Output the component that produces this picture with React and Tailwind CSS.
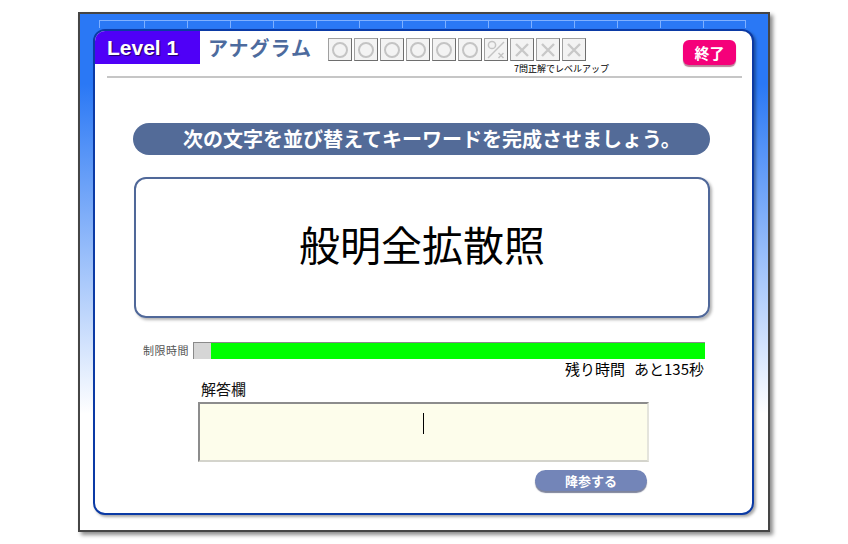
import React from 'react'

const jp = "font-['Noto_Sans_CJK_JP','Noto_Sans',sans-serif]"

const Circle = () => (
  <svg width="18" height="18" viewBox="0 0 18 18">
    <circle cx="9" cy="9" r="7" fill="none" stroke="#c4c4c4" strokeWidth="2" />
  </svg>
)

const Cross = () => (
  <svg width="18" height="18" viewBox="0 0 18 18">
    <path d="M3 3 L15 15 M15 3 L3 15" stroke="#c8c8c8" strokeWidth="2.4" />
  </svg>
)

const Half = () => (
  <svg width="20" height="20" viewBox="0 0 20 20">
    <circle cx="6" cy="5" r="3.6" fill="none" stroke="#c4c4c4" strokeWidth="1.5" />
    <path d="M2 18 L18 2" stroke="#c4c4c4" strokeWidth="1.5" />
    <path d="M12.5 13 L17.5 18 M17.5 13 L12.5 18" stroke="#c4c4c4" strokeWidth="1.5" />
  </svg>
)

const marks = ['o', 'o', 'o', 'o', 'o', 'o', 'h', 'x', 'x', 'x']

const Mark = ({ kind }) => (
  <div className="w-[24px] h-[23px] flex items-center justify-center bg-[#f3f3f3] border border-[#a0a0a0] border-r-[#6e6e6e] border-b-[#6e6e6e]">
    {kind === 'o' ? <Circle /> : kind === 'x' ? <Cross /> : <Half />}
  </div>
)

const Header = () => (
  <header className="flex items-start h-[45px]">
    <div className="w-[105px] h-[33px] bg-[#4f00f7] flex items-center pl-[12px]">
      <span className="font-['Liberation_Sans',sans-serif] font-bold text-[21px] text-white [text-shadow:1px_1px_1px_rgba(0,0,0,0.6)]">
        Level 1
      </span>
    </div>
    <div className="ml-[8px] h-[33px] flex items-center">
      <span className="text-[20px] font-bold text-[#4d6b9e] tracking-[1px]">アナグラム</span>
    </div>
    <div className="ml-[16px] pt-[7px] flex flex-col">
      <div className="flex gap-[2px]">
        {marks.map((m, i) => (
          <Mark key={i} kind={m} />
        ))}
      </div>
      <div className="text-[9px] leading-[11px] text-black text-right mt-[2px] mr-[-23px]">
        7問正解でレベルアップ
      </div>
    </div>
    <button className="ml-auto mt-[9px] mr-[16px] w-[53px] h-[25px] rounded-[6px] bg-[#f5007a] shadow-[0_2px_1px_rgba(120,0,50,0.5)] text-white font-bold text-[15px] leading-none">
      終了
    </button>
  </header>
)

const App = () => {
  const cells = Array.from({ length: 15 })

  return (
    <div className={`w-[848px] h-[544px] bg-white pt-[12px] pl-[78px] ${jp}`}>
      <div className="w-[692px] h-[520px] border-2 border-[#454545] shadow-[3px_3px_4px_rgba(0,0,0,0.45)] bg-[linear-gradient(to_bottom,#2a78f5_0px,#2a78f5_70px,#ffffff_400px)] pt-[6px]">
        <div className="ml-[19px] h-[8px] flex">
          {cells.map((_, i) => (
            <div
              key={i}
              className={`${i === 0 ? 'w-[45px]' : 'w-[43px]'} h-full border-t border-l border-[#7fb0ff] ${i === 14 ? 'border-r' : ''}`}
            />
          ))}
        </div>

        <div className="mt-[1px] ml-[13px] w-[661px] h-[486px] bg-white rounded-[12px] border-2 border-[#0b3aa5] shadow-[2px_2px_3px_rgba(0,0,0,0.35)] overflow-hidden">
          <Header />
          <div className="ml-[12px] w-[635px] h-[2px] bg-[#c6c6c6]" />

          <div className="mt-[45px] ml-[38px] w-[577px] h-[32px] rounded-full bg-[#536b98] flex items-center pl-[50px]">
            <span className="text-white font-bold text-[20px] leading-none">
              次の文字を並び替えてキーワードを完成させましょう。
            </span>
          </div>

          <div className="mt-[22px] ml-[39px] w-[576px] h-[141px] rounded-[12px] border-2 border-[#506899] shadow-[2px_2px_3px_rgba(0,0,0,0.3)] flex items-center justify-center pb-[8px]">
            <span className="text-[41px] text-black leading-none">般明全拡散照</span>
          </div>

          <div className="mt-[24px] flex items-center h-[17px]">
            <span className="ml-[48px] text-[11px] text-[#555] leading-none tracking-[0.5px]">制限時間</span>
            <div className="ml-[4px] w-[512px] h-[17px] flex border-t border-l border-[#8a8a8a]">
              <div className="w-[17px] h-full bg-[#d6d6d6]" />
              <div className="flex-1 h-full bg-[#00ff00]" />
            </div>
          </div>

          <div className="w-[609px] flex justify-end text-[15px] leading-[18px] mt-[1px] text-black">
            <span>残り時間</span>
            <span className="ml-[9px]">あと135秒</span>
          </div>

          <div className="ml-[106px] text-[15px] leading-[18px] mt-[2px] text-[#111]">解答欄</div>

          <div className="mt-[4px] ml-[103px] w-[451px] h-[60px] bg-[#fdfdeb] border-2 border-t-[#8c8c8c] border-l-[#8c8c8c] border-r-[#e4e4dc] border-b-[#d4d4cc] flex justify-center pt-[9px]">
            <div className="w-px h-[21px] bg-black" />
          </div>

          <button className="mt-[8px] ml-[440px] w-[112px] h-[21px] rounded-full bg-[#7385b8] shadow-[0_2px_1px_rgba(40,50,90,0.6)] text-white font-bold text-[13px] leading-none">
            降参する
          </button>
        </div>
      </div>
    </div>
  )
}

export default App
